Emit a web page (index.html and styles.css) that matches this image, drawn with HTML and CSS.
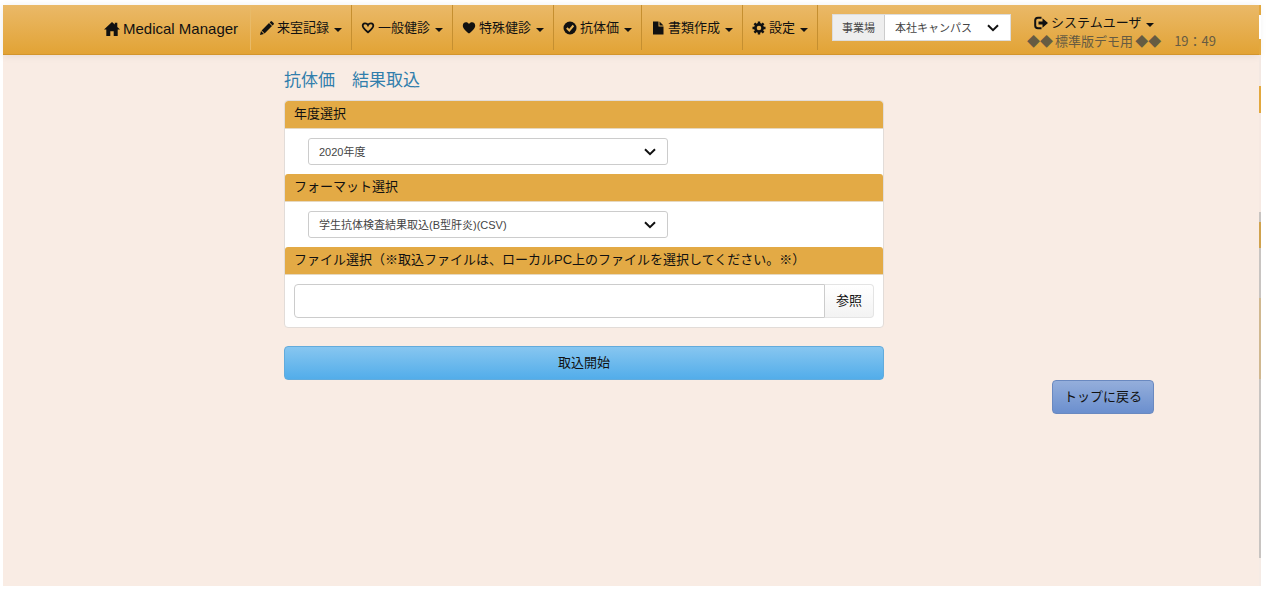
FILE: index.html
```html
<!DOCTYPE html>
<html lang="ja">
<head>
<meta charset="utf-8">
<title>Medical Manager - 抗体価 結果取込</title>
<link rel="stylesheet" href="styles.css">
</head>
<body>
<div class="app">
  <header class="navbar">
    <a class="brand" href="#">
      <svg class="brand-icon" viewBox="0 0 16 14" aria-hidden="true"><path d="M8 0 0 7.600h2.300V14h4V9.300h3.400V14h4V7.600H16L13.300 5V.8h-2.500v1.800z"/></svg>
      <span>Medical Manager</span>
    </a>
    <nav>
      <ul class="menu">
        <li><button class="menu-item" type="button"><svg class="icon" viewBox="0 0 14 14" aria-hidden="true"><path d="M0 14l1-4 2.900 2.900zM1.600 9.400l7.400-7.400 3 3-7.400 7.400zM9.600 1.400l1-1q.7-.6 1.400 0l1.600 1.600q.6.7 0 1.400l-1 1z"/></svg><span>来室記録</span><span class="caret"></span></button></li>
        <li><button class="menu-item" type="button"><svg class="icon" viewBox="0 0 14 14" aria-hidden="true"><path d="M7 11.300C4.500 9.100 1.700 7 1.700 4.700 1.700 1.800 5.600 1.400 7 4.200 8.400 1.400 12.300 1.800 12.300 4.700 12.300 7 9.500 9.100 7 11.300z" fill="none" stroke="#111" stroke-width="1.800"/></svg><span>一般健診</span><span class="caret"></span></button></li>
        <li><button class="menu-item" type="button"><svg class="icon" viewBox="0 0 14 14" aria-hidden="true"><path d="M7 12.600C4 9.900.8 7.500.8 4.700.8.600 5.700.300 7 3.200 8.300.300 13.200.600 13.200 4.700 13.200 7.500 10 9.900 7 12.600z"/></svg><span>特殊健診</span><span class="caret"></span></button></li>
        <li><button class="menu-item" type="button"><svg class="icon" viewBox="0 0 14 14" aria-hidden="true"><circle cx="7" cy="7" r="6.500"/><path d="M3.800 7l2.500 2.500 4.100-5" fill="none" stroke="#e8b457" stroke-width="2"/></svg><span>抗体価</span><span class="caret"></span></button></li>
        <li><button class="menu-item" type="button"><svg class="icon" viewBox="0 0 14 14" aria-hidden="true"><path d="M2 .5h5.500v5H12.500v8H2zM8.500.5l4 4h-4z"/></svg><span>書類作成</span><span class="caret"></span></button></li>
        <li><button class="menu-item" type="button"><svg class="icon" viewBox="0 0 14 14" aria-hidden="true"><circle cx="7" cy="7" r="3.600" fill="none" stroke="#111" stroke-width="2.600"/><path d="M7 .5v2.500M7 11v2.500M.5 7H3M11 7h2.500M2.400 2.400l1.800 1.800M9.800 9.800l1.800 1.800M11.600 2.400 9.800 4.200M4.200 9.800l-1.800 1.800" stroke="#111" stroke-width="2.400"/></svg><span>設定</span><span class="caret"></span></button></li>
      </ul>
    </nav>
    <div class="office">
      <label class="office-label" for="office">事業場</label>
      <div class="select-wrap office-select">
        <select id="office" class="select"><option>本社キャンパス</option></select>
        <svg class="chevron" viewBox="0 0 12 8" aria-hidden="true"><path d="M1 1.200 6 6.200 11 1.200"/></svg>
      </div>
    </div>
    <div class="account">
      <button class="user" type="button"><svg class="icon" viewBox="0 0 14 14" aria-hidden="true"><path d="M7.500 1.700H4Q1.200 1.700 1.200 4.500v5Q1.200 12.300 4 12.300H7.500" fill="none" stroke="#111" stroke-width="2"/><path d="M4.500 5.400h4V2.300L14 7l-5.500 4.700V8.600h-4z"/></svg><span>システムユーザ</span><span class="caret"></span></button>
      <div class="status"><span>◆◆</span><span>標準版デモ用</span><span>◆◆</span><time class="clock">19：49</time></div>
    </div>
  </header>
  <main class="content">
    <form class="import">
      <h1 class="title">抗体価　結果取込</h1>
      <div class="panel">
        <h2 class="panel-head"><label for="year">年度選択</label></h2>
        <div class="panel-body">
          <div class="select-wrap field">
            <select id="year" class="select"><option>2020年度</option></select>
            <svg class="chevron" viewBox="0 0 12 8" aria-hidden="true"><path d="M1 1.200 6 6.200 11 1.200"/></svg>
          </div>
        </div>
        <h2 class="panel-head"><label for="format">フォーマット選択</label></h2>
        <div class="panel-body">
          <div class="select-wrap field">
            <select id="format" class="select"><option>学生抗体検査結果取込(B型肝炎)(CSV)</option></select>
            <svg class="chevron" viewBox="0 0 12 8" aria-hidden="true"><path d="M1 1.200 6 6.200 11 1.200"/></svg>
          </div>
        </div>
        <h2 class="panel-head"><label for="file">ファイル選択（※取込ファイルは、ローカルPC上のファイルを選択してください。※）</label></h2>
        <div class="panel-body file-row">
          <input id="file" class="file-name" type="text">
          <button class="browse" type="button">参照</button>
        </div>
      </div>
      <button class="button start" type="button">取込開始</button>
    </form>
    <button class="button back" type="button">トップに戻る</button>
  </main>
</div>
<div class="edge"></div>
</body>
</html>
```
FILE: styles.css
```css
* { box-sizing: border-box; }

body {
  display: flex;
  min-height: 100vh;
  margin: 0;
  padding: 5px 5px 6px 3px;
  background: #fff;
  color: #111;
  font: 13px/18px "Liberation Sans", "Noto Sans CJK JP", sans-serif;
}

button, select, input { font: inherit; color: inherit; }
button { cursor: pointer; }
svg { fill: #111; flex: none; }

.app {
  flex: 1;
  min-width: 0;
  background: #f9ece4;
}

.edge {
  width: 2px;
  background: linear-gradient(#e3a83e 0 10px, #fff 10px 34px, #e3a83e 34px 50px, #f3e8e2 50px 81px, #e3a83e 81px 108px, #f6e9e2 108px 207px, #c8c4c1 207px 217px, #d0a24d 217px 243px, #c8c4c1 243px 293px, #d0b890 293px 374px, #c8c4c1 374px 553px, #f5ebe5 553px);
}

.navbar {
  display: flex;
  height: 50px;
  padding-left: 101px;
  background: linear-gradient(#eab968, #e2a335);
  border-bottom: 1px solid #d3952c;
  box-shadow: 0 1px 8px rgba(0, 0, 0, .08);
}

.brand {
  display: flex;
  align-items: center;
  gap: 3px;
  width: 146px;
  padding-bottom: 1px;
  color: #111;
  font-size: 15px;
  text-decoration: none;
  white-space: nowrap;
}

.brand-icon { width: 16px; height: 14px; }

.menu {
  display: flex;
  height: 45px;
  margin: 0;
  padding: 0;
  list-style: none;
  border-left: 1px solid #e8ba68;
}

.menu li { border-right: 1px solid #c58f30; }

.menu-item, .user {
  display: flex;
  align-items: center;
  gap: 3px;
  padding: 0;
  border: 0;
  background: none;
  white-space: nowrap;
}

.menu-item { height: 100%; padding: 0 9px; }
.icon { width: 14px; height: 14px; }

.caret {
  margin: 4px 0 0 2px;
  border: 4px solid transparent;
  border-top-color: #111;
  border-bottom: 0;
}

.office {
  display: flex;
  width: 179px;
  height: 27px;
  margin: 9px 0 0 14px;
  border: 1px solid #ddd;
  background: #fff;
  color: #444;
  font-size: 11px;
}

.office-label {
  display: flex;
  align-items: center;
  padding: 0 9px;
  border-right: 1px solid #ccc;
  background: #eee;
}

.select-wrap { position: relative; }
.office-select { flex: 1; }

.select {
  display: block;
  width: 100%;
  height: 100%;
  padding: 0 10px;
  border: 0;
  appearance: none;
  background: none;
}

.chevron {
  position: absolute;
  top: 50%;
  right: 11px;
  width: 12px;
  height: 8px;
  margin-top: -4px;
  fill: none;
  stroke: #111;
  stroke-width: 2;
  pointer-events: none;
}

.account {
  padding-top: 9px;
  margin-left: 16px;
  white-space: nowrap;
}

.user { margin-left: 7px; }

.status {
  display: flex;
  gap: 2px;
  color: #665b42;
  font-family: "Noto Sans CJK JP", sans-serif;
}

.clock { margin-left: 11px; }

.content {
  display: grid;
  grid-template-columns: 238fr 600fr 332fr;
  max-width: 1170px;
  margin: 0 auto;
}

.import { grid-column: 2; }

.title {
  margin: 14px 0 7px;
  color: #317eac;
  font-size: 17px;
  font-weight: 400;
  line-height: 24px;
}

.panel {
  margin-bottom: 18px;
  border: 1px solid #e2dcd8;
  border-radius: 4px;
  background: #fff;
  overflow: hidden;
}

.panel-head {
  margin: 0;
  padding: 4px 9px 5px;
  border-bottom: 1px solid #e6d8c0;
  border-radius: 3px 3px 0 0;
  background: #e3aa45;
  font-size: 13px;
  font-weight: 400;
}

.panel-body { padding: 9px; }

.field {
  width: 62%;
  height: 27px;
  margin-left: 14px;
  border: 1px solid #ccc;
  border-radius: 3px;
  color: #444;
  font-size: 11px;
}

.file-row { display: flex; }

.file-name {
  flex: 1;
  min-width: 0;
  height: 34px;
  padding: 0 10px;
  border: 1px solid #ccc;
  border-radius: 4px 0 0 4px;
  background: #fff;
}

.browse {
  width: 49px;
  padding: 0;
  border: 1px solid #e4e4e4;
  border-left: 0;
  border-radius: 0 4px 4px 0;
  background: linear-gradient(#fff, #f3f3f3);
}

.button {
  height: 34px;
  padding: 0 11px;
  border-radius: 4px;
}

.start {
  width: 100%;
  border: 1px solid #62abdc;
  background: linear-gradient(#87c6f0, #52adea);
}

.back {
  grid-row: 2;
  grid-column: 3;
  justify-self: end;
  margin-right: 62px;
  border: 1px solid #6a89c0;
  background: linear-gradient(#94aedb, #6b8fce);
}
```
